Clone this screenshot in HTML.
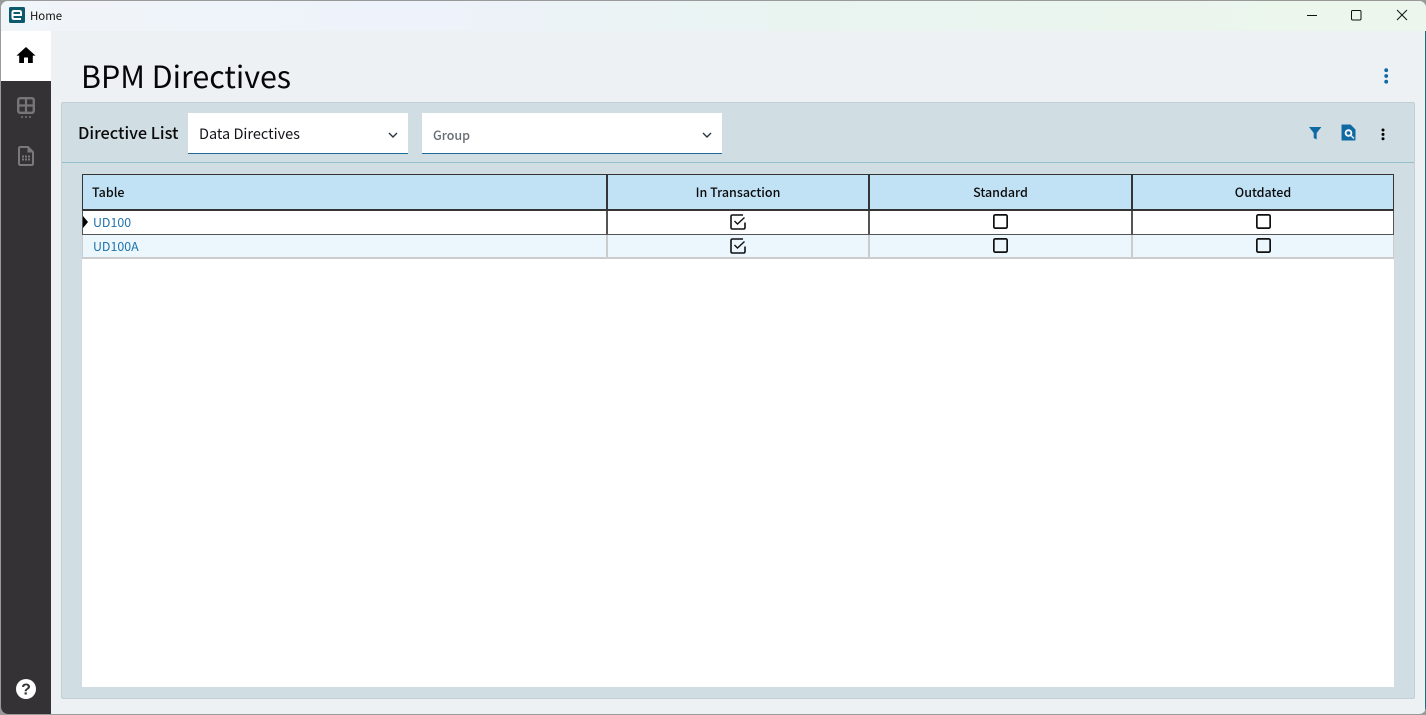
<!DOCTYPE html>
<html lang="en">
<head>
<meta charset="utf-8">
<title>BPM Directives</title>
<style>
html,body{margin:0;padding:0;width:1426px;height:715px;overflow:hidden;background:#9a9a9a;}
*{box-sizing:border-box;}
body{font-family:"Noto Sans CJK JP","Liberation Sans",sans-serif;color:#000;position:relative;}
.a{position:absolute;}
.t{position:absolute;white-space:nowrap;line-height:1;}
svg{position:absolute;display:block;overflow:visible;}
</style>
</head>
<body>
<div class="a" id="win" style="left:1px;top:1px;width:1425px;height:713px;background:#edf1f4;border-radius:7px;overflow:hidden;">
  <div class="a" style="left:0;top:0;width:1425px;height:30px;background:linear-gradient(90deg,#f0f5f9 0%,#eef2fa 30%,#e9f4f1 55%,#ecf6ec 100%);"></div>
  <div class="a" style="left:0;top:30px;width:50px;height:683px;background:#353235;"></div>
  <div class="a" style="left:0;top:30px;width:50px;height:50px;background:#fff;"></div>
  <div class="a" style="right:0;top:30px;width:1px;height:683px;background:#1c6f80;"></div>
</div>

<!-- Title bar -->
<svg style="left:9px;top:7px" width="16" height="16" viewBox="0 0 16 16">
  <rect width="16" height="16" rx="1.5" fill="#0d5a6e"/>
  <path d="M3.5 8h8.5V5.6Q12 4 10.4 4H5.1Q3.5 4 3.5 5.6v4.8Q3.5 12 5.1 12H12" fill="none" stroke="#fff" stroke-width="2"/>
</svg>
<div class="t" style="left:30px;top:10.5px;font-size:11.4px;color:#111;">Home</div>
<svg style="left:1306px;top:10px" width="12" height="12"><path d="M1 5.5H11" stroke="#111" stroke-width="1"/></svg>
<svg style="left:1351px;top:10px" width="11" height="11"><rect x=".5" y=".5" width="9.5" height="9.5" rx="1.2" fill="none" stroke="#111" stroke-width="1"/></svg>
<svg style="left:1396px;top:9px" width="12" height="12"><path d="M1 1L11 11M11 1L1 11" stroke="#111" stroke-width="1"/></svg>

<!-- Sidebar icons -->
<svg style="left:16px;top:46px" width="20" height="18" viewBox="0 0 20 18">
  <path d="M10 1L0.5 9.6H3.2V17H8V11.5H12V17H16.8V9.6H19.5Z" fill="#000"/>
</svg>
<svg style="left:17px;top:97px" width="18" height="22" viewBox="0 0 18 22">
  <rect x="1.2" y="1.2" width="15.6" height="14.6" rx="2" fill="none" stroke="#777577" stroke-width="2.4"/>
  <path d="M1 8.5H17M9 1V16" stroke="#777577" stroke-width="2.2"/>
  <path d="M4 20H6M8 20H10M12 20H14" stroke="#777577" stroke-width="1.5"/>
</svg>
<svg style="left:18px;top:146px" width="16" height="20" viewBox="0 0 16 20">
  <path d="M2.5 1H10L15 6V17.5Q15 19 13.5 19H2.5Q1 19 1 17.5V2.5Q1 1 2.5 1Z" fill="none" stroke="#7a787a" stroke-width="2"/>
  <path d="M9.5 1V6.5H15Z" fill="#7a787a"/>
  <path d="M4 9.5h2v2H4zM7 9.5h2v2H7zM10 9.5h2v2h-2zM4 12.5h2v2H4zM7 12.5h2v2H7zM10 12.5h2v2h-2z" fill="#7a787a"/>
</svg>
<svg style="left:16px;top:679px" width="20" height="20" viewBox="0 0 20 20">
  <circle cx="10" cy="10" r="10" fill="#fff"/>
  <text x="10" y="15.6" text-anchor="middle" font-family="Liberation Sans, sans-serif" font-weight="700" font-size="16" fill="#353235">?</text>
</svg>

<!-- Page title -->
<div class="t" style="left:81px;top:60px;font-size:30.4px;color:#05060a;">BPM Directives</div>
<svg style="left:1384px;top:68px" width="5" height="16">
  <circle cx="2.2" cy="2.2" r="1.9" fill="#0f6aa3"/><circle cx="2.2" cy="8" r="1.9" fill="#0f6aa3"/><circle cx="2.2" cy="13.7" r="1.9" fill="#0f6aa3"/>
</svg>

<!-- Panel -->
<div class="a" style="left:61px;top:102px;width:1354px;height:597px;background:#d0dde2;border:1px solid #c2cfd4;border-radius:2px;"></div>
<div class="a" style="left:62px;top:162px;width:1352px;height:1px;background:#96bfcb;"></div>

<div class="t" style="left:78px;top:124px;font-size:16.3px;font-weight:500;color:#0a0a0a;">Directive List</div>

<div class="a" style="left:188px;top:113px;width:220px;height:41px;background:#fff;border-bottom:1px solid #1f6a96;"></div>
<div class="t" style="left:199px;top:127px;font-size:14.5px;color:#14141a;">Data Directives</div>
<svg style="left:388px;top:132px" width="10" height="6"><path d="M1 1L5 5L9 1" fill="none" stroke="#2a3540" stroke-width="1.4"/></svg>

<div class="a" style="left:422px;top:113px;width:300px;height:41px;background:#fff;border-bottom:1px solid #1f6a96;"></div>
<div class="t" style="left:433px;top:129px;font-size:12.5px;font-weight:500;color:#666c70;">Group</div>
<svg style="left:702px;top:132px" width="10" height="6"><path d="M1 1L5 5L9 1" fill="none" stroke="#2a3540" stroke-width="1.4"/></svg>

<!-- Toolbar icons -->
<svg style="left:1309px;top:126px" width="13" height="14" viewBox="0 0 13 14">
  <path d="M0 1H12.4L7.7 7V13.5L4.7 12V7Z" fill="#0f6aa3"/>
</svg>
<svg style="left:1341px;top:124px" width="15" height="17" viewBox="0 0 15 17">
  <path d="M1 0.5H9.5L14.5 5.5V15.5Q14.5 16.5 13.5 16.5H1Q0.5 16.5 0.5 16V1Q0.5 0.5 1 0.5Z" fill="#0f6aa3"/>
  <circle cx="7.5" cy="9" r="3.2" fill="#d0dde2" stroke="#fff" stroke-width="1.2"/>
  <circle cx="7.5" cy="9" r="1.8" fill="#0f6aa3"/>
  <path d="M10 11.5L13 14.5" stroke="#d0dde2" stroke-width="1.6"/>
</svg>
<svg style="left:1381px;top:128px" width="4" height="13">
  <circle cx="2" cy="2" r="1.5" fill="#000"/><circle cx="2" cy="6.4" r="1.5" fill="#000"/><circle cx="2" cy="10.8" r="1.5" fill="#000"/>
</svg>

<!-- White grid area -->
<div class="a" style="left:82px;top:175px;width:1312px;height:512px;background:#fff;"></div>

<!-- Header -->
<div class="a" style="left:82px;top:174px;width:1312px;height:37px;background:#c1e2f5;border:1px solid #343434;border-bottom-width:2px;"></div>
<div class="a" style="left:606px;top:175px;width:2px;height:35px;background:#343434;"></div>
<div class="a" style="left:868px;top:175px;width:2px;height:35px;background:#343434;"></div>
<div class="a" style="left:1131px;top:175px;width:2px;height:35px;background:#343434;"></div>
<div class="t" style="left:92px;top:186px;font-size:12.5px;font-weight:500;color:#0a0a0a;">Table</div>
<div class="t" style="left:608px;width:260px;text-align:center;top:186px;font-size:12.5px;font-weight:500;color:#0a0a0a;">In Transaction</div>
<div class="t" style="left:870px;width:261px;text-align:center;top:186px;font-size:12.5px;font-weight:500;color:#0a0a0a;">Standard</div>
<div class="t" style="left:1133px;width:260px;text-align:center;top:186px;font-size:12.5px;font-weight:500;color:#0a0a0a;">Outdated</div>

<!-- Row 1 -->
<div class="a" style="left:82px;top:211px;width:1312px;height:24px;background:#fff;border:1px solid #555;border-top:0;"></div>
<div class="a" style="left:606px;top:211px;width:2px;height:23px;background:#555;"></div>
<div class="a" style="left:868px;top:211px;width:2px;height:23px;background:#555;"></div>
<div class="a" style="left:1131px;top:211px;width:2px;height:23px;background:#555;"></div>
<svg style="left:83px;top:216px" width="6" height="12"><path d="M0 0L5 6L0 12Z" fill="#000"/></svg>
<div class="t" style="left:93px;top:216px;font-size:12.4px;color:#1f72ad;">UD100</div>

<!-- Row 2 -->
<div class="a" style="left:82px;top:235px;width:1312px;height:24px;background:#ebf7fd;border:1px solid #ccc;border-top:0;border-bottom-width:2px;"></div>
<div class="a" style="left:606px;top:235px;width:2px;height:22px;background:#ccc;"></div>
<div class="a" style="left:868px;top:235px;width:2px;height:22px;background:#ccc;"></div>
<div class="a" style="left:1131px;top:235px;width:2px;height:22px;background:#ccc;"></div>
<div class="t" style="left:93px;top:240px;font-size:12.4px;color:#1f72ad;">UD100A</div>

<!-- Checkboxes -->
<svg style="left:730px;top:214px" width="16" height="16" viewBox="0 0 16 16">
  <path d="M15 8.5V13.5Q15 15 13.5 15H2.5Q1 15 1 13.5V2.5Q1 1 2.5 1H13" fill="none" stroke="#111" stroke-width="1.6"/>
  <path d="M4.5 7L7.5 10L14.5 3.5" fill="none" stroke="#111" stroke-width="1.4"/>
</svg>
<svg style="left:730px;top:238px" width="16" height="16" viewBox="0 0 16 16">
  <path d="M15 8.5V13.5Q15 15 13.5 15H2.5Q1 15 1 13.5V2.5Q1 1 2.5 1H13" fill="none" stroke="#111" stroke-width="1.6"/>
  <path d="M4.5 7L7.5 10L14.5 3.5" fill="none" stroke="#111" stroke-width="1.4"/>
</svg>
<svg style="left:993px;top:214px" width="15" height="15"><rect x=".85" y=".85" width="13.3" height="13.3" rx="1.4" fill="none" stroke="#111" stroke-width="1.7"/></svg>
<svg style="left:993px;top:238px" width="15" height="15"><rect x=".85" y=".85" width="13.3" height="13.3" rx="1.4" fill="none" stroke="#111" stroke-width="1.7"/></svg>
<svg style="left:1256px;top:214px" width="15" height="15"><rect x=".85" y=".85" width="13.3" height="13.3" rx="1.4" fill="none" stroke="#111" stroke-width="1.7"/></svg>
<svg style="left:1256px;top:238px" width="15" height="15"><rect x=".85" y=".85" width="13.3" height="13.3" rx="1.4" fill="none" stroke="#111" stroke-width="1.7"/></svg>
</body>
</html>
